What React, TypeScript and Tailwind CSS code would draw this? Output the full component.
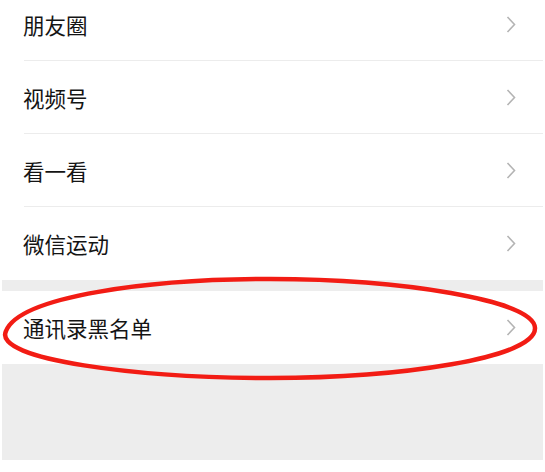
const items = ['朋友圈', '视频号', '看一看', '微信运动'];

function Chevron() {
  return (
    <svg width="10" height="17" viewBox="0 0 10 17" fill="none">
      <polyline points="1.5,1 8.5,8.5 1.5,16" stroke="#b4b4b4" strokeWidth="1.6" strokeLinejoin="miter" />
    </svg>
  );
}

function Row({ label, last }: { label: string; last?: boolean }) {
  return (
    <div className="relative flex h-[73px] items-center justify-between bg-white pl-[21px] pr-[27px]">
      <span className="text-[21.5px] leading-none text-[#141414]">{label}</span>
      <Chevron />
      {!last && <div className="absolute bottom-0 left-[22px] right-0 h-px bg-[#ececec]" />}
    </div>
  );
}

export default function App() {
  return (
    <div
      className="relative h-screen overflow-hidden bg-white px-[2px]"
      style={{ fontFamily: '"Noto Sans CJK SC", "Noto Sans", sans-serif' }}
    >
      <div className="h-full bg-[#ededed]">
        <div className="-mt-[12px] bg-white">
          {items.map((t, i) => (
            <Row key={t} label={t} last={i === items.length - 1} />
          ))}
        </div>
        <div className="mt-[11px]">
          <Row label="通讯录黑名单" last />
        </div>
      </div>
      <svg className="pointer-events-none absolute left-0 top-0" width="545" height="472">
        <path
          d="M 6 331 C 20 296, 150 279, 270 279 C 400 279, 534 300, 535 328 C 536 358, 400 378, 270 378 C 140 378, -8 360, 6 331 Z"
          fill="none"
          stroke="#f21c14"
          strokeWidth="4.5"
        />
      </svg>
    </div>
  );
}
